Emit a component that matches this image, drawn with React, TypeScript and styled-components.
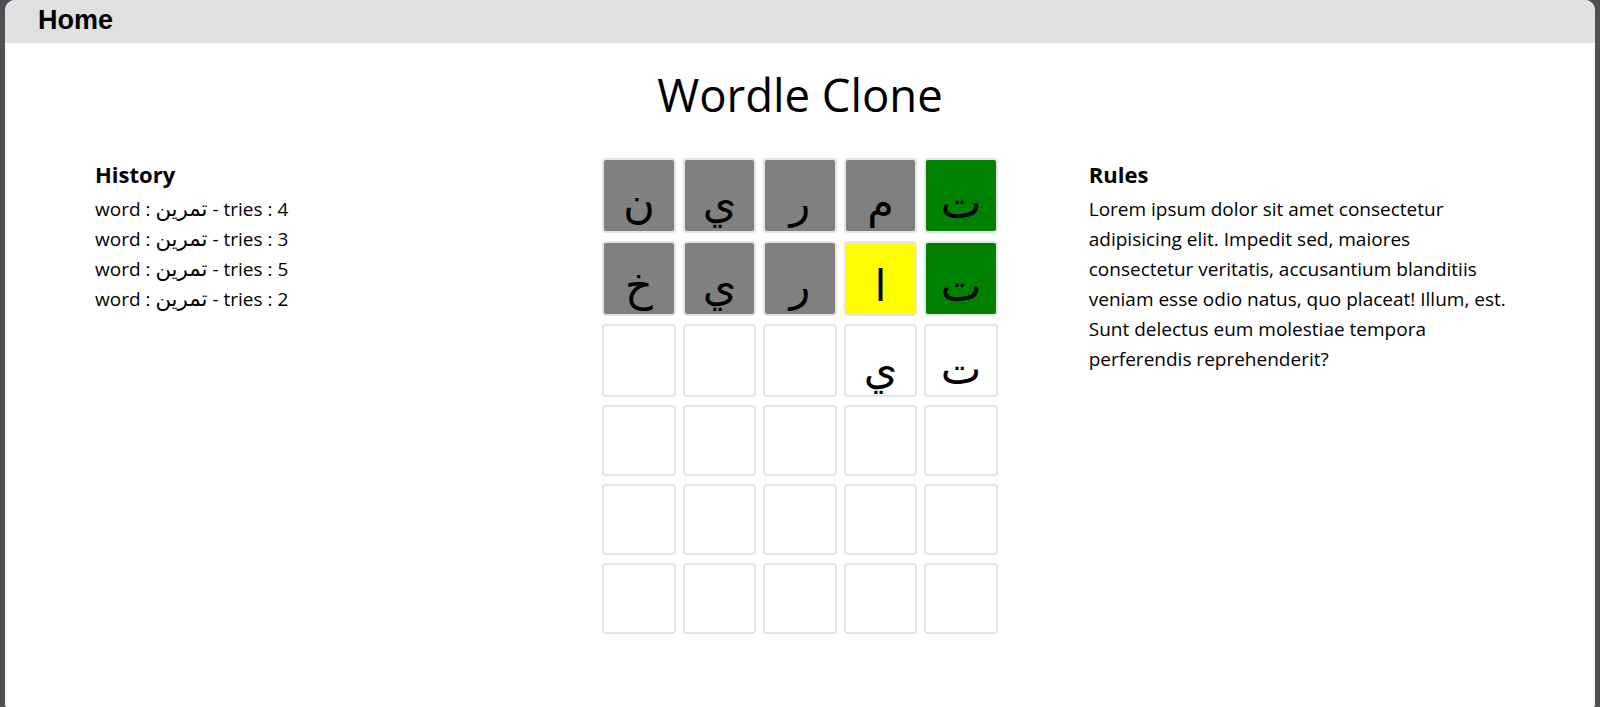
import React from "react";
import styled, { createGlobalStyle } from "styled-components";

const GlobalStyle = createGlobalStyle`
  html, body {
    margin: 0;
    padding: 0;
    background: #4f4f55;
  }
  body {
    font-family: "Open Sans", "DejaVu Sans", sans-serif;
    color: #000;
  }
`;

const Window = styled.div`
  margin: 0 5px;
  min-height: 707px;
  background: #ffffff;
  border-radius: 10px 10px 2px 2px;
  overflow: hidden;
  display: flex;
  flex-direction: column;
`;

const NavBar = styled.nav`
  height: 43px;
  background: #e0e0e0;
  display: flex;
  align-items: center;
  padding-left: 33px;
`;

const NavLink = styled.a`
  font-family: "Liberation Sans", Arial, sans-serif;
  font-weight: 700;
  font-size: 27px;
  color: #000;
  text-decoration: none;
  margin-top: -2px;
`;

const Title = styled.h1`
  margin: 21px 0 0;
  text-align: center;
  font-family: "Open Sans", sans-serif;
  font-weight: 400;
  font-size: 45.5px;
  line-height: 60px;
`;

const Main = styled.main`
  display: grid;
  grid-template-columns: 1fr auto 1fr;
  margin-top: 33px;
`;

const SideColumn = styled.section<{ $right?: boolean }>`
  padding: 0 ${(p) => (p.$right ? "80px" : "0")} 0 ${(p) => (p.$right ? "91px" : "90px")};
  font-size: 19px;
  line-height: 30px;
`;

const SideHeading = styled.h3`
  margin: 2px 0 5px;
  font-size: 22px;
  font-weight: 700;
  line-height: 30px;
`;

const HistoryList = styled.ul`
  list-style: none;
  margin: 0;
  padding: 0;
`;

const HistoryItem = styled.li`
  margin: 0;
`;

const ArabicWord = styled.span`
  font-size: 1.12em;
  line-height: 1;
`;

const RulesText = styled.p`
  margin: 0;
`;

const Board = styled.div`
  display: flex;
  flex-direction: column;
  gap: 8px;
  padding-top: 1px;
`;

const BoardRow = styled.div`
  display: flex;
  gap: 7px;
`;

type TileState = "empty" | "typed" | "absent" | "present" | "correct";

const tileBg: Record<TileState, string> = {
  empty: "#ffffff",
  typed: "#ffffff",
  absent: "#808080",
  present: "#ffff00",
  correct: "#008000",
};

const Tile = styled.div<{ $state: TileState; $h: number }>`
  box-sizing: border-box;
  width: 73.5px;
  height: ${(p) => p.$h}px;
  border: 2px solid #e3e3e8;
  border-radius: 4px;
  background: ${(p) => tileBg[p.$state]};
  display: flex;
  justify-content: center;
  font-family: "DejaVu Sans", sans-serif;
  font-size: 43px;
  line-height: 1;
  padding-top: 22px;
  color: #000;
`;

const rows: { letters: string[]; states: TileState[]; h: number }[] = [
  {
    letters: ["ن", "ي", "ر", "م", "ت"],
    states: ["absent", "absent", "absent", "absent", "correct"],
    h: 75,
  },
  {
    letters: ["خ", "ي", "ر", "ا", "ت"],
    states: ["absent", "absent", "absent", "present", "correct"],
    h: 75,
  },
  {
    letters: ["", "", "", "ي", "ت"],
    states: ["empty", "empty", "empty", "typed", "typed"],
    h: 73,
  },
  { letters: ["", "", "", "", ""], states: ["empty", "empty", "empty", "empty", "empty"], h: 71 },
  { letters: ["", "", "", "", ""], states: ["empty", "empty", "empty", "empty", "empty"], h: 71 },
  { letters: ["", "", "", "", ""], states: ["empty", "empty", "empty", "empty", "empty"], h: 71 },
];

const history = [4, 3, 5, 2];

export default function App() {
  return (
    <>
      <GlobalStyle />
      <Window>
        <NavBar>
          <NavLink href="#">Home</NavLink>
        </NavBar>
        <Title>Wordle Clone</Title>
        <Main>
          <SideColumn>
            <SideHeading>History</SideHeading>
            <HistoryList>
              {history.map((t, i) => (
                <HistoryItem key={i}>
                  word : <ArabicWord>تمرين</ArabicWord> - tries : {t}
                </HistoryItem>
              ))}
            </HistoryList>
          </SideColumn>
          <Board>
            {rows.map((r, ri) => (
              <BoardRow key={ri}>
                {r.letters.map((l, li) => (
                  <Tile key={li} $state={r.states[li]} $h={r.h}>
                    {l}
                  </Tile>
                ))}
              </BoardRow>
            ))}
          </Board>
          <SideColumn $right>
            <SideHeading>Rules</SideHeading>
            <RulesText>
              Lorem ipsum dolor sit amet consectetur adipisicing elit. Impedit sed, maiores consectetur
              veritatis, accusantium blanditiis veniam esse odio natus, quo placeat! Illum, est. Sunt
              delectus eum molestiae tempora perferendis reprehenderit?
            </RulesText>
          </SideColumn>
        </Main>
      </Window>
    </>
  );
}
